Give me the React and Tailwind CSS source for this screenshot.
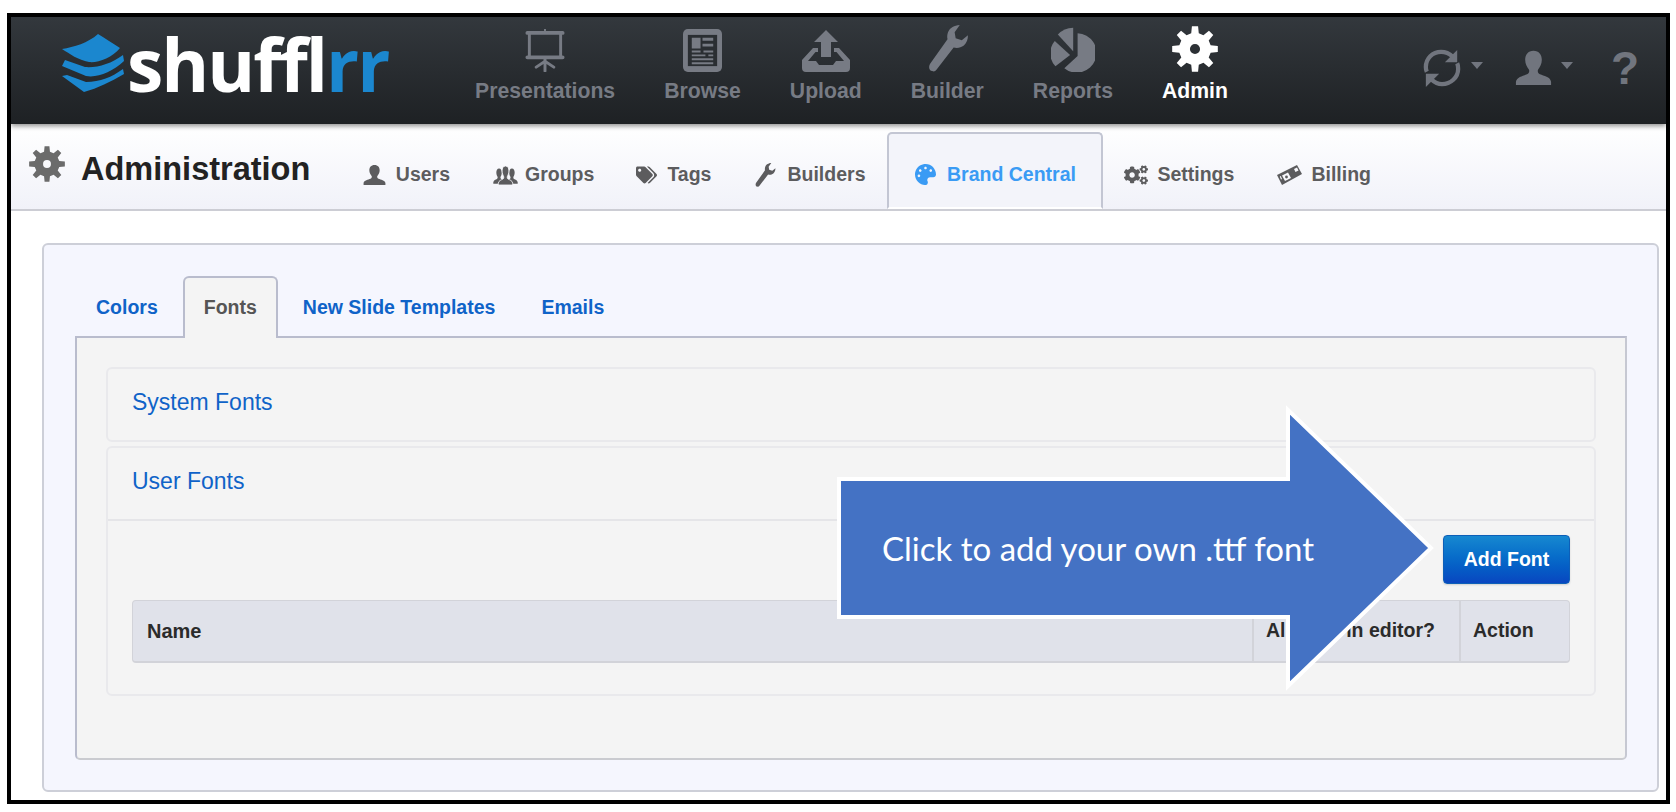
import { FaTags, FaPalette, FaCogs } from "react-icons/fa";

const gearPath = (teeth, outer, inner, hole) => {
  const c = 50
  const step = (Math.PI * 2) / teeth
  let d = ''
  for (let i = 0; i < teeth; i++) {
    const a = i * step - Math.PI / 2
    const pts = [
      [inner, a - step * 0.3],
      [outer, a - step * 0.17],
      [outer, a + step * 0.17],
      [inner, a + step * 0.3],
    ]
    pts.forEach(([r, t], j) => {
      d += `${i === 0 && j === 0 ? 'M' : 'L'}${(c + r * Math.cos(t)).toFixed(1)} ${(c + r * Math.sin(t)).toFixed(1)}`
    })
  }
  d += `Z M${c - hole} ${c}a${hole} ${hole} 0 1 0 ${hole * 2} 0a${hole} ${hole} 0 1 0 ${-hole * 2} 0Z`
  return d
}

const GEAR = gearPath(8, 50, 35, 11)
const BUST = "M20 2c-6 0-9 5-9 11 0 5 2 9 4 12 1 2 0 5-2 6-4 2-11 3-12 9v4h38v-4c-1-6-8-7-12-9-2-1-3-4-2-6 2-3 4-7 4-12 0-6-3-11-9-11Z"
const WRENCH = "M2 41c0-1 .5-2 1-3L20 14c-1-5 1-10 5-12 2-1 4-2 7-2l-5 7 1 6 6 2 6-5c0 4-1 7-4 10-3 2-6 3-10 2L9 44c-1 1-2 2-4 1-2 0-3-2-3-4Z"

const Gear = ({ className }) => (
  <svg viewBox="0 0 100 100" className={className} fill="currentColor">
    <path fillRule="evenodd" d={GEAR} />
  </svg>
)

const Bust = ({ className }) => (
  <svg viewBox="0 0 40 44" preserveAspectRatio="none" className={className} fill="currentColor">
    <path d={BUST} />
  </svg>
)

const Wrench = ({ className }) => (
  <svg viewBox="0 0 40 46" className={className} fill="currentColor">
    <path d={WRENCH} />
  </svg>
)

const Groups = ({ className }) => (
  <svg viewBox="0 0 66 44" preserveAspectRatio="none" className={className} fill="currentColor">
    <path transform="translate(0 6) scale(.8)" d={BUST} />
    <path transform="translate(34 6) scale(.8)" d={BUST} />
    <path transform="translate(13 0)" stroke="#f9f9fc" strokeWidth="2" d={BUST} />
  </svg>
)

const Billing = ({ className }) => (
  <svg viewBox="0 0 25 20" className={className}>
    <path fill="currentColor" d="M0 10 20 0l5 9L5 20Z" />
    <path fill="#f8f8fc" d="M5 10.500 11 7.500l3 5.500-6 3ZM17 4l3-1.500 1.500 3L18.500 7ZM2.800 11.500l1-.5 1.200 3-1 .5Z" />
    <circle cx="9.500" cy="12" r="1.400" fill="currentColor" />
  </svg>
)

const Presentation = ({ className }) => (
  <svg viewBox="0 0 40 44" className={className} fill="none" stroke="currentColor" strokeLinecap="round">
    <path d="M20 0v3" strokeWidth="2" />
    <path d="M2 4h36M2 29h36" strokeWidth="4" />
    <path d="M4 4v25M36 4v25" strokeWidth="3" />
    <path d="M20 30v13M11 39l9-6 9 6" strokeWidth="3" />
  </svg>
)

const Browse = ({ className }) => (
  <svg viewBox="0 0 40 44" className={className}>
    <rect width="40" height="44" rx="5" fill="currentColor" />
    <rect x="5" y="6" width="30" height="32" fill="#2a2e32" />
    <path fill="currentColor" d="M9 9h9v11H9zM20 9h11v3H20zM20 15h11v3H20zM9 22h9v2H9zM21 22h10v2H21zM9 26h14v2H9zM26 26h5v2h-5zM9 30h22v2H9zM9 34h22v2H9z" />
  </svg>
)

const Upload = ({ className }) => (
  <svg viewBox="0 0 48 42" className={className} fill="currentColor">
    <path d="M24 0 36 12H29V27H19V12H12Z" />
    <path d="M11 18h5v4h-2.500L6 31h8l3 4h14l3-4h8l-7.500-9H32v-4h5l11 12v8a4 4 0 0 1-4 4H4a4 4 0 0 1-4-4v-8Z" />
  </svg>
)

const Pie = ({ className }) => (
  <svg viewBox="33 15 127 132" className={className} fill="currentColor">
    <path d="M52 37A62 62 0 0 1 97 17V86Z" />
    <path d="M43 56 88 97 45 130A55 55 0 0 1 43 56Z" />
    <path d="M110 33A58 58 0 1 1 71 136L110 100Z" />
  </svg>
)

const Sync = ({ className }) => (
  <svg viewBox="0 0 40 40" className={className} fill="none" stroke="currentColor" strokeWidth="4.500">
    <path d="M31 8C27 4 23 3 19 3 10 3 3 10 3 19c0 2 0 3 1 5" />
    <path d="M9 32c3 3 7 5 11 5 9 0 17-7 17-16 0-2 0-4-1-6" />
    <path fill="currentColor" stroke="none" d="M36 1v13H23ZM3 40V26h14Z" />
  </svg>
)

const Caret = () => <span className="block w-0 h-0 border-x-[6.500px] border-x-transparent border-t-[7px] border-t-[#71757e]" />

const NAV = [
  { label: 'Presentations', icon: <Presentation className="w-[40px] h-[43px]" /> },
  { label: 'Browse', icon: <Browse className="w-[39px] h-[43px]" /> },
  { label: 'Upload', icon: <Upload className="w-[48px] h-[42px]" /> },
  { label: 'Builder', icon: <Wrench className="w-[45px] h-[47px]" /> },
  { label: 'Reports', icon: <Pie className="w-[44px] h-[45px]" /> },
  { label: 'Admin', icon: <Gear className="w-[46px] h-[46px]" />, active: true },
]

const TABS = [
  { label: 'Users', icon: <Bust className="w-[23px] h-[21px] mr-[10px]" /> },
  { label: 'Groups', icon: <Groups className="w-[25px] h-[20px] mr-[7px]" />, extra: '-mr-[1px]' },
  { label: 'Tags', icon: <FaTags className="w-[21px] h-[20px] mr-[10px]" /> },
  { label: 'Builders', icon: <Wrench className="w-[22px] h-[24px] mr-[11px]" />, extra: '-mr-[1px]' },
  { label: 'Brand Central', icon: <FaPalette className="w-[23px] h-[21px] mr-[10px]" />, active: true },
  { label: 'Settings', icon: <FaCogs className="w-[24px] h-[20px] mr-[9px]" /> },
  { label: 'Billing', icon: <Billing className="w-[25px] h-[20px] mr-[9px]" /> },
]

const App = () => {
  return (
    <div className="relative w-full h-[812px] bg-white pt-[13px] pl-[7px] pr-[6px] font-['Liberation_Sans',Arial,sans-serif] overflow-hidden">
      <div className="h-[791px] border-[4px] border-black flex flex-col overflow-hidden">
        <header className="h-[107px] shrink-0 flex bg-gradient-to-b from-[#33383d] to-[#1e2124] shadow-[0_2px_5px_rgba(0,0,0,0.45)] z-10">
          <div className="w-[464px] shrink-0 pl-[51px] pt-[17px] flex items-start">
            <svg viewBox="0 0 62 58" className="w-[62px] h-[58px] text-[#1b87cf]" fill="currentColor">
              <path d="M0 15C12 13 26 9 36 0c7 4 14 9 22 14C50 24 36 29 27 28 16 26 8 20 0 15Z" />
              <path d="M3 26l20 7c12 1 26-3 38-12l1 6C50 38 36 44 24 42L0 32Z" />
              <path d="M5 41l19 7c14 0 26-5 37-13l1 5C48 48 36 54 22 58L0 42Z" />
            </svg>
            <div className="ml-[3px] -mt-[15px] text-[73px] leading-[90px] font-bold tracking-[-2px] text-white font-['Open_Sans',sans-serif]">
              shuffl<span className="text-[#1b87cf]">rr</span>
            </div>
          </div>
          <nav className="flex gap-[49.100px]">
            {NAV.map(item => (
              <div key={item.label} className={`flex flex-col items-center ${item.active ? 'text-white' : 'text-[#777b84]'}`}>
                <div className="h-[62px] flex items-end pb-[7px]">{item.icon}</div>
                <span className="text-[21.200px] leading-[24px] font-bold">{item.label}</span>
              </div>
            ))}
          </nav>
          <div className="ml-auto pr-[27px] flex items-start pt-[32px] text-[#71757e]">
            <Sync className="w-[38px] h-[38px]" />
            <span className="ml-[10px] mr-[32px] mt-[13px]"><Caret /></span>
            <Bust className="w-[37px] h-[36px]" />
            <span className="ml-[9px] mr-[38px] mt-[13px]"><Caret /></span>
            <span className="text-[46px] leading-[38px] font-bold">?</span>
          </div>
        </header>

        <div className="h-[87px] shrink-0 flex bg-gradient-to-b from-white to-[#f1f2f9] border-b-2 border-[#cccdd4]">
          <Gear className="w-[36px] h-[36px] ml-[18px] mt-[22px] text-[#6b6b6b]" />
          <h1 className="ml-[16px] mt-[24px] text-[32.500px] leading-[42px] font-bold text-[#222]">Administration</h1>
          <div className="ml-[31px] flex self-end h-[77px]">
            {TABS.map(tab => (
              <div
                key={tab.label}
                className={tab.active
                  ? "flex items-center pt-[8px] px-[25px] ml-[1px] text-[#3a9bf4] bg-[#f3f4fa] border-2 border-b-white border-[#c3c6d3] rounded-t-[5px]"
                  : `flex items-center pt-[8px] px-[21.500px] text-[#5c5c5e] ${tab.extra || ''}`}
              >
                {tab.icon}
                <span className="text-[19.500px] font-bold">{tab.label}</span>
              </div>
            ))}
          </div>
        </div>

        <main className="flex-1 pt-[32px] pl-[31px] pr-[7px] pb-[8px] flex">
          <section className="flex-1 flex flex-col bg-[#f5f6fe] border-2 border-[#cdcfd8] rounded-[6px] pt-[31px] pl-[31px] pr-[30px] pb-[30px]">
            <div className="flex gap-[4px] h-[62px] shrink-0 -mb-[2px] z-10 text-[19.500px] font-bold text-[#0f63c8]">
              <div className="px-[21px] pt-[17px]">Colors</div>
              <div className="px-[19px] pt-[15px] border-2 border-b-0 border-[#b9bccd] rounded-t-[6px] bg-[#f4f4f4] text-[#555]">Fonts</div>
              <div className="px-[21px] pt-[17px]">New Slide Templates</div>
              <div className="px-[21px] pt-[17px]">Emails</div>
            </div>
            <div className="flex-1 bg-[#f4f4f4] border-2 border-[#b9bccd] border-r-[#c6c8d2] border-b-[#cacbd0] rounded-b-[5px] pt-[29px] px-[29px]">
              <div className="h-[75px] border-2 border-[#e9e9ec] rounded-[6px] flex items-center px-[24px] pb-[4px] text-[23px] text-[#0f63c8] mb-[4px]">System Fonts</div>
              <div className="h-[250px] border-2 border-[#e9e9ec] rounded-[6px]">
                <div className="h-[73px] flex items-center px-[24px] pb-[5px] text-[23px] text-[#0f63c8] border-b-2 border-[#e5e5e8]">User Fonts</div>
                <div className="pt-[14px] px-[24px]">
                  <div className="flex justify-end">
                    <button className="w-[127px] h-[49px] rounded-[4px] border border-[#0d5fb8] bg-gradient-to-b from-[#1788d0] to-[#0a46c0] text-white text-[19.500px] font-bold shadow-[0_1px_2px_rgba(0,0,0,0.15)]">Add Font</button>
                  </div>
                  <div className="mt-[16px] h-[63px] flex bg-[#e0e2ea] border border-b-2 border-[#d2d3d9] rounded-[4px] text-[19.500px] font-bold text-[#2b2b2b]">
                    <div className="flex-1 flex items-center pl-[14px] text-[20px]">Name</div>
                    <div className="w-[207px] flex items-center pl-[12px] border-l-2 border-[#d2d3d9]">Allowed in editor?</div>
                    <div className="w-[110px] flex items-center pl-[12px] border-l-2 border-[#d2d3d9]">Action</div>
                  </div>
                </div>
              </div>
            </div>
          </section>
        </main>
      </div>

      {/* callout sits over the page */}
      <div className="absolute left-[835px] top-[400px] w-[610px] h-[296px]">
        <svg viewBox="835 400 610 296" className="w-full h-full">
          <path d="M839 479H1288V410L1431 548L1288 686V617H839Z" fill="#4472c4" stroke="#fff" strokeWidth="4" />
        </svg>
        <span className="absolute left-[47px] top-[128px] text-[33px] leading-[40px] text-white whitespace-nowrap font-['Lato',sans-serif]">Click to add your own .ttf font</span>
      </div>
    </div>
  )
}

export default App
